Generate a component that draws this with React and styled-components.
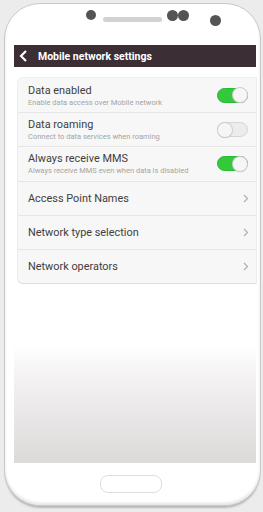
import styled, { createGlobalStyle } from "styled-components"

const Global = createGlobalStyle`
  html, body {
    margin: 0;
    padding: 0;
    background: #ececec;
    font-family: Roboto, "Liberation Sans", Arial, sans-serif;
  }
`

const Page = styled.div`
  width: 263px;
  height: 512px;
  padding: 3px 0 0 4px;
  box-sizing: border-box;
`

const Phone = styled.div`
  width: 257px;
  height: 503px;
  box-sizing: border-box;
  background: #fff;
  border: 1.5px solid #c9c9c9;
  border-radius: 36px;
  box-shadow: 0 3px 2px -1px #b8b8b8, inset 0 -2px 3px #e4e4e4;
  display: flex;
  flex-direction: column;
  overflow: hidden;
`

const TopBezel = styled.div`
  height: 41px;
  display: flex;
  align-items: flex-start;
  padding: 6px 0 0 81px;
  box-sizing: border-box;
`

const Dot = styled.span`
  width: ${p => p.$size || 11}px;
  height: ${p => p.$size || 11}px;
  border-radius: 50%;
  background: #545454;
  margin-top: ${p => p.$top || 0}px;
  margin-left: ${p => p.$left || 0}px;
  flex: none;
`

const Speaker = styled.span`
  width: 59px;
  height: 5px;
  border-radius: 3px;
  background: #d2d2d2;
  margin: 7px 0 0 7px;
`

const Screen = styled.div`
  margin-left: 9px;
  width: 242px;
  height: 418px;
  display: flex;
  flex-direction: column;
  background: linear-gradient(to bottom, #fff 0, #fff 300px, #f3f1f1 335px, #dcd9d9 100%);
`

const Header = styled.div`
  height: 22px;
  background: #3b2f35;
  display: flex;
  align-items: center;
  gap: 10px;
  padding-left: 5px;
  color: #fff;
  font-size: 10.5px;
  font-weight: 700;
`

const Content = styled.div`
  padding: 11px 0 0 4px;
`

const Card = styled.div`
  background: #f7f7f7;
  border-radius: 5px 0 0 5px;
  box-shadow: 0 1px 1px #dcdcdc, 0 0 0 1px #efefef;
  display: flex;
  flex-direction: column;
`

const Row = styled.div`
  height: 34.2px;
  display: flex;
  align-items: center;
  justify-content: space-between;
  padding: 0 7px 0 10px;
  border-top: ${p => (p.$first ? "none" : "1px solid #e6e6e6")};
  box-sizing: border-box;
`

const Texts = styled.div`
  display: flex;
  flex-direction: column;
  gap: 1px;
`

const Title = styled.div`
  font-size: 10.9px;
  color: #3e3e3e;
  line-height: 13px;
`

const Sub = styled.div`
  font-size: 7.5px;
  color: #a4a4a4;
  line-height: 9px;
`

const Toggle = styled.div`
  width: 31px;
  height: 15px;
  border-radius: 8px;
  box-sizing: border-box;
  background: ${p => (p.$on ? "#33c93a" : "#ececec")};
  border: 1px solid ${p => (p.$on ? "#2bb832" : "#d6d6d6")};
  display: flex;
  align-items: center;
  justify-content: ${p => (p.$on ? "flex-end" : "flex-start")};
  margin-right: 1px;
`

const Knob = styled.span`
  width: 14px;
  height: 14px;
  border-radius: 50%;
  background: #f6f6f6;
  box-shadow: 0 0 0 1px #cfcfcf, 0 1px 1px #aaa;
`

const Back = () => (
  <svg width="9" height="12" viewBox="0 0 9 12">
    <path d="M7 1 L2 6 L7 11" fill="none" stroke="#fff" strokeWidth="2.2" />
  </svg>
)

const Chevron = () => (
  <svg width="6" height="9" viewBox="0 0 6 9">
    <path d="M1 1 L4.5 4.5 L1 8" fill="none" stroke="#b3b3b3" strokeWidth="1.3" />
  </svg>
)

const HomeBtn = styled.div`
  width: 62px;
  height: 18px;
  margin: 12px 0 0 95px;
  border: 1px solid #dedede;
  border-radius: 8px;
  box-sizing: border-box;
`

const switches = [
  { title: "Data enabled", sub: "Enable data access over Mobile network", on: true },
  { title: "Data roaming", sub: "Connect to data services when roaming", on: false },
  { title: "Always receive MMS", sub: "Always receive MMS even when data is disabled", on: true },
]

const links = ["Access Point Names", "Network type selection", "Network operators"]

export default function App() {
  return (
    <>
      <Global />
      <Page>
        <Phone>
          <TopBezel>
            <Dot $size={10} />
            <Speaker />
            <Dot $left={5} />
            <Dot />
            <Dot $left={21} $top={5} />
          </TopBezel>
          <Screen>
            <Header>
              <Back />
              Mobile network settings
            </Header>
            <Content>
              <Card>
                {switches.map((s, i) => (
                  <Row key={s.title} $first={i === 0}>
                    <Texts>
                      <Title>{s.title}</Title>
                      <Sub>{s.sub}</Sub>
                    </Texts>
                    <Toggle $on={s.on}>
                      <Knob />
                    </Toggle>
                  </Row>
                ))}
                {links.map(l => (
                  <Row key={l}>
                    <Title>{l}</Title>
                    <Chevron />
                  </Row>
                ))}
              </Card>
            </Content>
          </Screen>
          <HomeBtn />
        </Phone>
      </Page>
    </>
  )
}
